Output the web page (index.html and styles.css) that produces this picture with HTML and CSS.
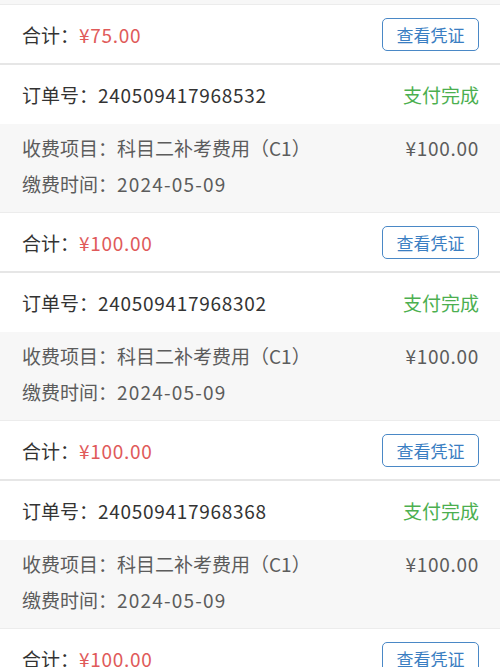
FILE: index.html
```html
<!DOCTYPE html>
<html lang="zh-CN">
<head>
<meta charset="utf-8">
<title>缴费记录</title>
<link rel="stylesheet" href="styles.css">
</head>
<body>
<div class="list">
  <div class="card">
    <div class="tail"></div>
    <div class="foot">
      <div class="total">合计：<span class="money num">¥75.00</span></div>
      <button class="btn">查看凭证</button>
    </div>
  </div>

  <div class="card">
    <div class="head">
      <div class="order">订单号：<span class="num">240509417968532</span></div>
      <div class="status">支付完成</div>
    </div>
    <div class="detail">
      <div class="line"><span>收费项目：科目二补考费用（C1）</span><span class="num">¥100.00</span></div>
      <div class="line"><span>缴费时间：<span class="date">2024-05-09</span></span></div>
    </div>
    <div class="foot">
      <div class="total">合计：<span class="money num">¥100.00</span></div>
      <button class="btn">查看凭证</button>
    </div>
  </div>

  <div class="card">
    <div class="head">
      <div class="order">订单号：<span class="num">240509417968302</span></div>
      <div class="status">支付完成</div>
    </div>
    <div class="detail">
      <div class="line"><span>收费项目：科目二补考费用（C1）</span><span class="num">¥100.00</span></div>
      <div class="line"><span>缴费时间：<span class="date">2024-05-09</span></span></div>
    </div>
    <div class="foot">
      <div class="total">合计：<span class="money num">¥100.00</span></div>
      <button class="btn">查看凭证</button>
    </div>
  </div>

  <div class="card">
    <div class="head">
      <div class="order">订单号：<span class="num">240509417968368</span></div>
      <div class="status">支付完成</div>
    </div>
    <div class="detail">
      <div class="line"><span>收费项目：科目二补考费用（C1）</span><span class="num">¥100.00</span></div>
      <div class="line"><span>缴费时间：<span class="date">2024-05-09</span></span></div>
    </div>
    <div class="foot">
      <div class="total">合计：<span class="money num">¥100.00</span></div>
      <button class="btn">查看凭证</button>
    </div>
  </div>
</div>
</body>
</html>
```
FILE: styles.css
```css
html, body {
  margin: 0;
  padding: 0;
  background: #ffffff;
}
body {
  font-family: "Noto Sans CJK SC", "Noto Sans", sans-serif;
  font-size: 19px;
  color: #333333;
  overflow: hidden;
}
.card {
  border-bottom: 2px solid #e6e6e6;
  background: #ffffff;
}
.tail {
  height: 4px;
  background: #f7f7f7;
}
.head {
  height: 59px;
  padding: 0 21px 0 22px;
  display: flex;
  align-items: center;
  justify-content: space-between;
}
.order {
  color: #333333;
}
.num {
  letter-spacing: 0.7px;
}
.date {
  letter-spacing: 1.2px;
}
.status {
  color: #4caf50;
}
.detail {
  background: #f7f7f7;
  padding: 5px 21px 11px 22px;
  color: #5c5c5c;
}
.line {
  height: 36px;
  display: flex;
  align-items: center;
  justify-content: space-between;
}
.foot {
  height: 58px;
  border-top: 1px solid #ececec;
  padding: 0 21px 0 22px;
  display: flex;
  align-items: center;
  justify-content: space-between;
}
.money {
  color: #e05a5a;
}
.btn {
  width: 97px;
  height: 33px;
  border: 1px solid #4a88c6;
  border-radius: 5px;
  background: #ffffff;
  color: #3a7ec2;
  font-family: "Noto Sans CJK SC", sans-serif;
  font-size: 17px;
  padding: 0;
  line-height: 1;
}
```
